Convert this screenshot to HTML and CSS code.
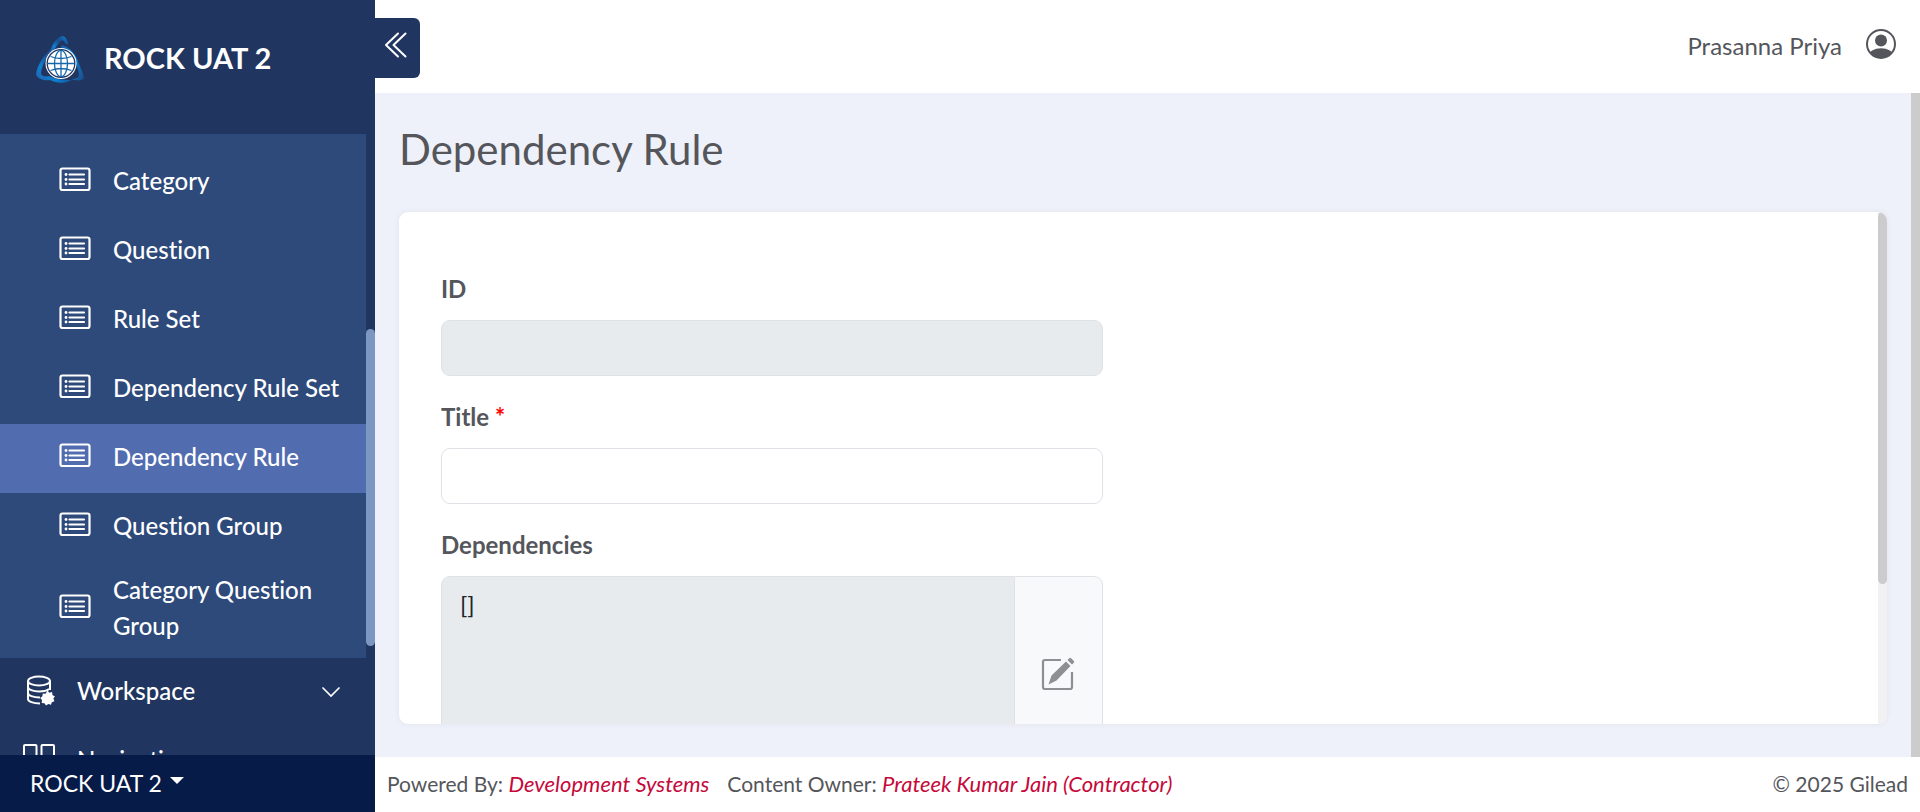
FILE: index.html
```html
<!DOCTYPE html>
<html lang="en">
<head>
<meta charset="utf-8">
<title>Dependency Rule</title>
<link rel="stylesheet" href="styles.css">
</head>
<body>
<svg class="sprite" aria-hidden="true">
  <symbol id="list" viewBox="0 0 32 32">
    <rect x="1.5" y="4.5" width="29" height="21.5" rx="2" fill="none" stroke="currentColor" stroke-width="2.2"/>
    <path d="M10.500 10.500h14.500M10.500 15.500h14.500M10.500 20h14.500" stroke="currentColor" stroke-width="2.200" stroke-linecap="round"/>
    <circle cx="7" cy="10.500" r="1.400" fill="currentColor"/><circle cx="7" cy="15.500" r="1.400" fill="currentColor"/><circle cx="7" cy="20" r="1.400" fill="currentColor"/>
  </symbol>
</svg>
<div class="app">
  <aside class="sidebar">
    <div class="brand">
      <svg class="brand-logo" viewBox="0 0 48 48" aria-hidden="true">
        <defs>
          <linearGradient id="blade-left" x1="0" y1="1" x2="1" y2="0"><stop offset="0" stop-color="#2a5ea8"/><stop offset=".3" stop-color="#0c7fd0"/><stop offset=".6" stop-color="#1b4a8c"/><stop offset="1" stop-color="#0a84d6"/></linearGradient>
          <linearGradient id="blade-right" x1="0" y1="0" x2="1" y2="1"><stop offset="0" stop-color="#1c579f"/><stop offset=".5" stop-color="#0a84d6"/><stop offset="1" stop-color="#1f4988"/></linearGradient>
        </defs>
        <path d="M14 16C16 9 20 1 27 0c3 1 5 5 5 9l-3-2c-1-3-3-3-5-1-3 3-5 6-6 9z" fill="url(#blade-left)"/>
        <path d="M26 9c9 3 14 9 17 19 2 5 4 9 5 14-2 3-8 3-13 1 4 0 8-1 8-4-1-11-7-20-19-26z" fill="url(#blade-right)"/>
        <path d="M15 13C8 18 1 30 0 38c1 5 8 7 14 6 8 4 16 3 22 0-9 0-17-1-23-4-4 1-8 0-8-3 1-8 5-15 10-20z" fill="url(#blade-left)"/>
        <circle cx="25" cy="27.500" r="15.500" fill="#fff"/>
        <circle cx="25" cy="27.500" r="13.800" fill="#fff" stroke="#203660" stroke-width="1.300"/>
        <g fill="none" stroke="#1668ac" stroke-width="1.300"><path d="M25 14v27M12 27.500h26M14.500 20.500q10.500 4 21 0M14.500 34.500q10.500-4 21 0"/><ellipse cx="25" cy="27.500" rx="6.500" ry="13.200"/></g>
      </svg>
      <span class="brand-name">ROCK UAT 2</span>
    </div>
    <div class="nav-scroll">
      <nav class="nav">
        <div class="submenu">
          <a class="sub-item" href="#"><svg class="icon"><use href="#list"/></svg><span>Category</span></a>
          <a class="sub-item" href="#"><svg class="icon"><use href="#list"/></svg><span>Question</span></a>
          <a class="sub-item" href="#"><svg class="icon"><use href="#list"/></svg><span>Rule Set</span></a>
          <a class="sub-item" href="#"><svg class="icon"><use href="#list"/></svg><span>Dependency Rule Set</span></a>
          <a class="sub-item active" href="#" aria-current="page"><svg class="icon"><use href="#list"/></svg><span>Dependency Rule</span></a>
          <a class="sub-item" href="#"><svg class="icon"><use href="#list"/></svg><span>Question Group</span></a>
          <a class="sub-item" href="#"><svg class="icon"><use href="#list"/></svg><span>Category Question Group</span></a>
        </div>
        <a class="nav-item" href="#">
          <svg class="icon" viewBox="0 0 32 32" fill="none" stroke="currentColor" stroke-width="2"><ellipse cx="16" cy="6" rx="11" ry="4.500"/><path d="M5 6v18c0 2.500 5 4.500 12 4.500M27 6v9M5 12c0 2.500 5 4.500 11 4.500 4 0 8-.8 10-2.500M5 18c0 2.500 5 4.500 12 4.500"/><path d="M24.500 15.500l1.800 2.200 2.800-.6.300 2.900 2.500 1.400-1.500 2.200 1 2.700-2.600.9-.8 2.600-2.700-.7-2.300 1.500-1.500-2.300-2.800-.4.300-2.800-1.800-2.200 2.200-1.700.4-2.700 2.700.3z" fill="currentColor" stroke="none"/></svg>
          <span class="nav-text">Workspace</span>
          <svg class="chevron" viewBox="0 0 20 20" fill="none" stroke="currentColor" stroke-width="1.700" stroke-linecap="round"><path d="M2 7l8 8 8-8"/></svg>
        </a>
        <a class="nav-item" href="#">
          <svg class="icon" viewBox="0 0 32 32" fill="none" stroke="currentColor" stroke-width="2"><rect x="1" y="1" width="12.500" height="17" rx="1"/><rect x="18.500" y="1" width="12.500" height="17" rx="1"/><rect x="1" y="22.500" width="12.500" height="8.500" rx="1"/><rect x="18.500" y="22.500" width="12.500" height="8.500" rx="1"/></svg>
          <span class="nav-text">Navigation</span>
        </a>
      </nav>
      <div class="scrollbar scrollbar-nav"><div class="thumb"></div></div>
    </div>
    <button class="app-switch" type="button">ROCK UAT 2<span class="caret"></span></button>
  </aside>

  <div class="page">
    <header class="topbar">
      <button class="collapse" type="button" aria-label="Collapse menu">
        <svg viewBox="0 0 24 26" fill="none" stroke="currentColor" stroke-width="2" stroke-linecap="round" stroke-linejoin="round"><path d="M14 1.500L2 13l12 11.500M21.500 1.500L9.500 13l12 11.500"/></svg>
      </button>
      <a class="user" href="#">
        <span>Prasanna Priya</span>
        <svg class="avatar" viewBox="0 0 30 30"><defs><clipPath id="head"><circle cx="15" cy="15" r="14"/></clipPath></defs><circle cx="15" cy="15" r="14" fill="none" stroke="currentColor" stroke-width="2"/><circle cx="15" cy="11.500" r="6" fill="currentColor"/><ellipse cx="15" cy="27" rx="12.500" ry="7.800" fill="currentColor" clip-path="url(#head)"/></svg>
      </a>
    </header>

    <div class="body">
      <main class="main">
        <h1 class="title">Dependency Rule</h1>
        <section class="card">
          <form class="form">
            <div class="field">
              <label for="rule-id">ID</label>
              <input class="control" id="rule-id" type="text" disabled>
            </div>
            <div class="field">
              <label for="rule-title">Title <span class="required">*</span></label>
              <input class="control" id="rule-title" type="text" required>
            </div>
            <div class="field">
              <label for="rule-deps">Dependencies</label>
              <div class="group">
                <textarea class="control area" id="rule-deps" readonly>[]</textarea>
                <button class="edit" type="button" aria-label="Edit dependencies">
                  <svg viewBox="0 0 34 34"><path d="M20 3H4Q2 3 2 5v25q0 2 2 2h25q2 0 2-2V15" fill="none" stroke="currentColor" stroke-width="2.200"/><path d="M25 4.500l4.500 4.500L15.500 23.500l-8 4 3-9zM26.500 3l1.800-1.700q.9-.9 1.800 0L32.800 4q.9.900 0 1.800L31 7.500z" fill="currentColor"/></svg>
                </button>
              </div>
            </div>
          </form>
          <div class="scrollbar scrollbar-card"><div class="thumb"></div></div>
        </section>
      </main>
      <div class="scrollbar scrollbar-page"></div>
    </div>

    <footer class="footer">
      <div class="credits">
        <span>Powered By: <a href="#">Development Systems</a></span>
        <span>Content Owner: <a href="#">Prateek Kumar Jain (Contractor)</a></span>
      </div>
      <span>© 2025 Gilead</span>
    </footer>
  </div>
</div>
</body>
</html>
```
FILE: styles.css
```css
* { box-sizing: border-box; }

body {
  margin: 0;
  font-family: Lato, "Liberation Sans", sans-serif;
  font-size: 24px;
  line-height: 36px;
  font-variant-ligatures: none;
  color: #54565b;
}

a { color: inherit; text-decoration: none; }
button { font: inherit; border: 0; padding: 0; cursor: pointer; }
.sprite { position: absolute; width: 0; height: 0; }

.app { display: flex; height: 100vh; overflow: hidden; }

/* Sidebar */
.sidebar {
  flex: 0 0 375px;
  display: flex;
  flex-direction: column;
  background: #203660;
  color: #fff;
}
.brand {
  flex: 0 0 134px;
  display: flex;
  align-items: flex-start;
  gap: 20px;
  padding: 36px 36px 0;
}
.brand-logo { width: 48px; height: 48px; }
.brand-name { font-size: 29px; line-height: 43px; font-weight: 700; }

.nav-scroll { flex: 1; min-height: 0; display: flex; overflow: hidden; }
.nav { flex: 1; min-width: 0; font-weight: 500; }
.submenu { padding-top: 14px; background: #2e4a7b; }
.sub-item {
  display: flex;
  align-items: center;
  gap: 22px;
  min-height: 69px;
  padding: 10px 16px 14px 59px;
}
.sub-item.active { background: #526cb0; }
.icon { flex: none; width: 32px; height: 32px; margin-bottom: 2px; }
.nav-item {
  display: flex;
  align-items: center;
  gap: 22px;
  min-height: 69px;
  padding: 0 25px 3px 23px;
}
.nav-item .icon { margin: 0; }
.nav-text { flex: 1; }
.chevron { width: 20px; height: 20px; }

.scrollbar { flex: none; width: 9px; }
.thumb { border-radius: 5px; }
.scrollbar-nav { padding-top: 195px; }
.scrollbar-nav .thumb { height: 317px; background: #7c98c2; }

.app-switch {
  flex: 0 0 57px;
  display: flex;
  align-items: center;
  gap: 8px;
  padding: 0 30px 2px;
  background: #061b47;
  color: #fff;
  font-size: 23px;
}
.caret {
  border: 7px solid transparent;
  border-top-color: #fff;
  border-bottom: 0;
  margin-bottom: 4px;
}

/* Page */
.page { flex: 1; min-width: 0; display: flex; flex-direction: column; }
.topbar {
  flex: 0 0 93px;
  display: flex;
  justify-content: space-between;
  align-items: flex-start;
  padding: 18px 24px 0 0;
  background: #fff;
}
.collapse {
  width: 45px;
  height: 60px;
  padding: 14px 12px 20px 9px;
  border-radius: 0 6px 6px 0;
  background: #203660;
  color: #fff;
}
.collapse svg { display: block; width: 24px; height: 26px; }
.user { display: flex; align-items: center; gap: 24px; padding-top: 10px; }
.avatar { width: 30px; height: 30px; margin-bottom: 4px; }

.body { flex: 1; min-height: 0; display: flex; background: #eef1f9; }
.main {
  flex: 1;
  min-width: 0;
  display: flex;
  flex-direction: column;
  padding: 26px 24px 33px;
}
.title { margin: 0 0 33px; font-size: 42px; line-height: 60px; font-weight: 400; }
.scrollbar-page { background: #ccc; }

.card {
  flex: 1;
  min-height: 0;
  display: flex;
  overflow: hidden;
  border-radius: 9px;
  background: #fff;
  box-shadow: 0 0 6px rgba(0, 0, 0, 0.06);
}
.form { flex: 1; padding: 59px 42px 0; }
.scrollbar-card { background: #f1f1f1; }
.scrollbar-card .thumb { height: 372px; background: #ccc; }

.field {
  display: flex;
  flex-direction: column;
  gap: 13px;
  width: 50%;
  padding-right: 36px;
  margin-bottom: 23px;
}
.field label { font-weight: 700; }
.required { color: #f00; }
.control {
  display: block;
  width: 100%;
  height: 56px;
  padding: 10px 18px;
  border: 1px solid #dee2e6;
  border-radius: 9px;
  background: #fff;
  color: #212529;
  font: inherit;
}
.control:disabled, .control:read-only { background: #e8ebee; }
.group { display: flex; }
.area { flex: 1; height: 195px; resize: none; border-radius: 9px 0 0 9px; }
.edit {
  flex: 0 0 88px;
  display: grid;
  place-items: center;
  border: 1px solid #dee2e6;
  border-left: 0;
  border-radius: 0 9px 9px 0;
  background: #f8f9fb;
  color: #8e8e93;
}
.edit svg { width: 34px; height: 34px; }

.footer {
  flex: 0 0 55px;
  display: flex;
  justify-content: space-between;
  align-items: center;
  padding: 0 12px 2px;
  background: #fff;
  font-size: 21px;
}
.credits { display: flex; gap: 18px; }
.footer a { color: #c5093b; font-size: 22px; font-style: italic; }
```
